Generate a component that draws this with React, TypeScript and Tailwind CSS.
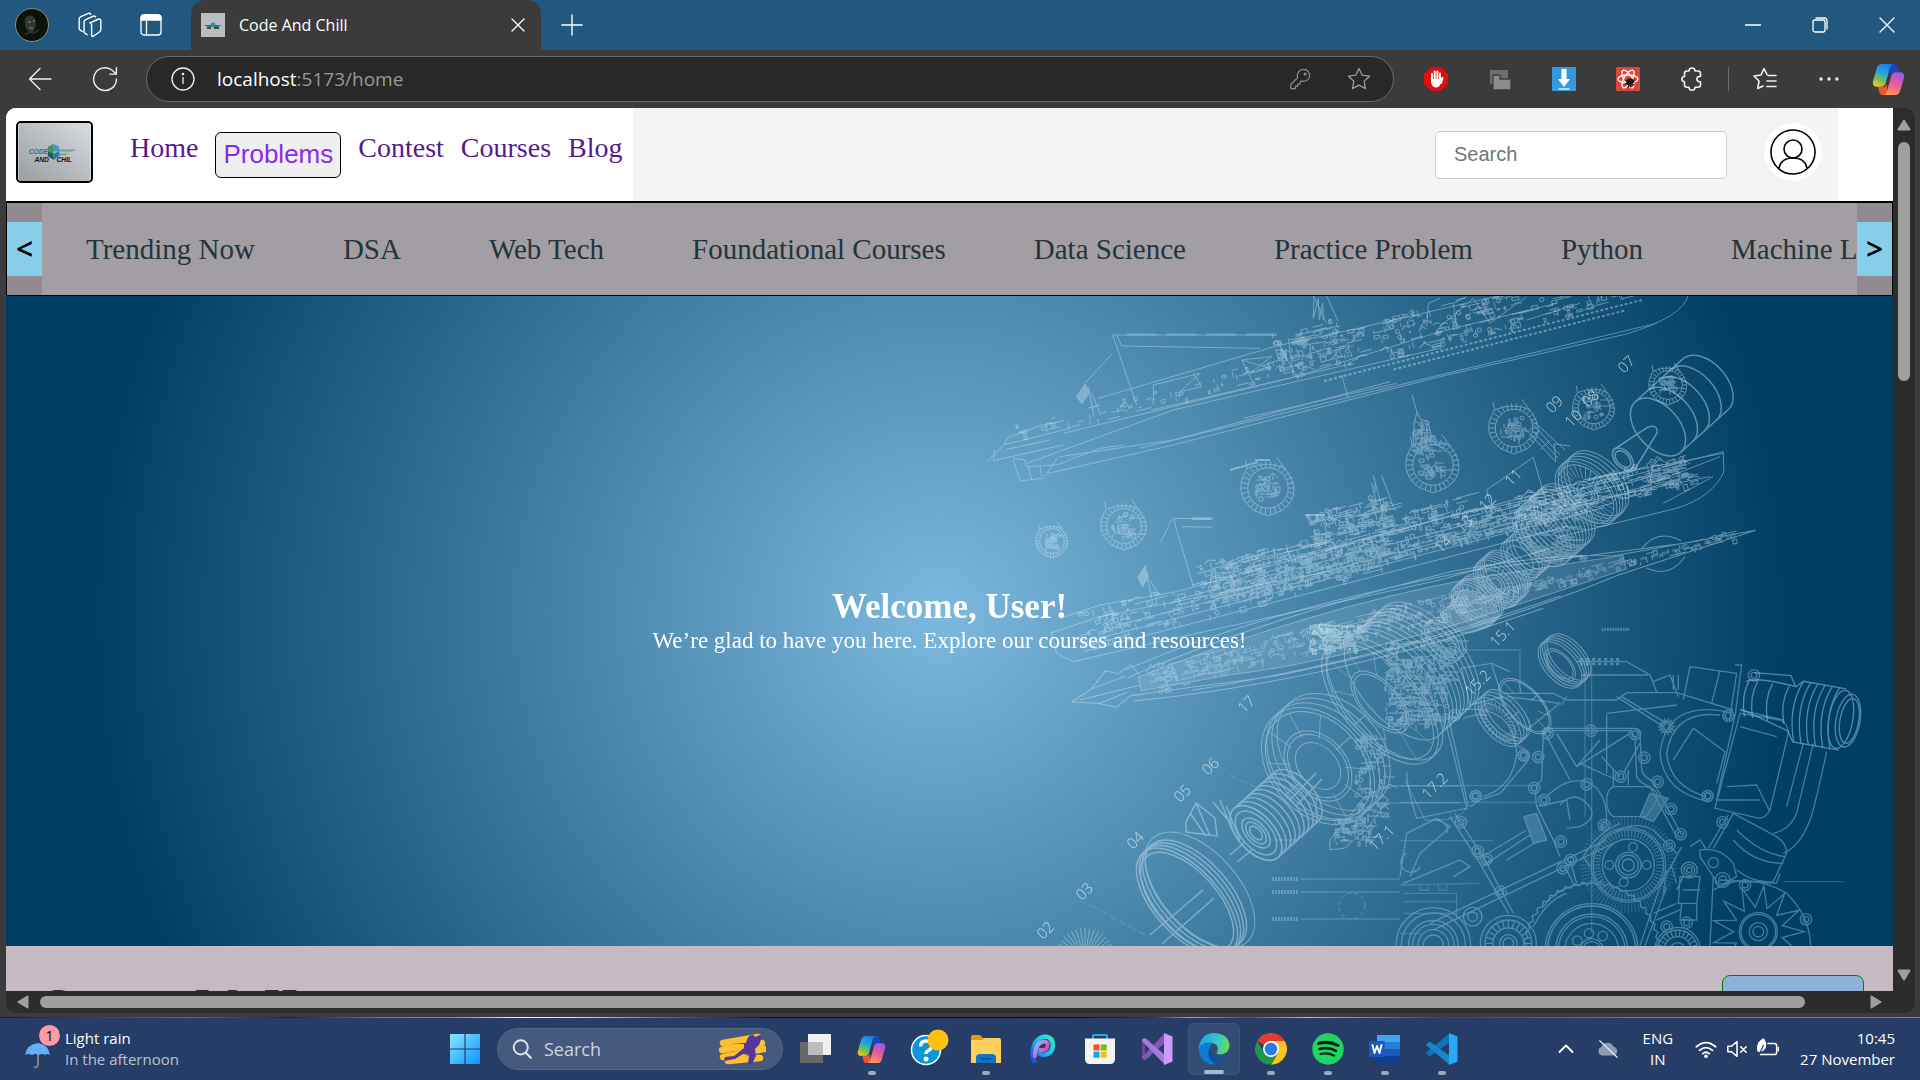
import React from "react";

/* ---------- blueprint artwork helpers ---------- */

function seeded(seed: number) {
  let s = seed;
  return () => {
    s = (s * 16807) % 2147483647;
    return s / 2147483647;
  };
}

/* Small boxes, ticks and struts scattered along a band of a hull. */
function clutter(seed: number, n: number, u0: number, u1: number, v0: number, v1: number, size: number) {
  const r = seeded(seed);
  let d = "";
  for (let i = 0; i < n; i++) {
    const u = Math.round(u0 + r() * (u1 - u0));
    const v = Math.round(v0 + r() * (v1 - v0));
    const w = Math.round(1 + r() * size);
    const h = Math.round(1 + r() * size * 0.7);
    const k = r();
    if (k < 0.3) d += `M${u} ${v}h${w}v${h}h${-w}z`;
    else if (k < 0.55) d += `M${u} ${v}v${h + 2}`;
    else if (k < 0.82) d += `M${u} ${v}h${w * 3}`;
    else if (k < 0.9) d += `M${u} ${v}l${w} ${-h}l${w} ${h}`;
    else d += `M${u} ${v}a2 2 0 1 0 4 0a2 2 0 1 0 -4 0`;
  }
  return d;
}

function teeth(cx: number, cy: number, r0: number, r1: number, n: number) {
  let d = "";
  for (let i = 0; i < n; i++) {
    const a = (i / n) * Math.PI * 2;
    const c = Math.cos(a);
    const s = Math.sin(a);
    d += `M${(cx + c * r0).toFixed(1)} ${(cy + s * r0).toFixed(1)}L${(cx + c * r1).toFixed(1)} ${(cy + s * r1).toFixed(1)}`;
  }
  return d;
}

function star(cx: number, cy: number, r0: number, r1: number, n: number) {
  let d = "";
  for (let i = 0; i < n * 2; i++) {
    const a = (i / (n * 2)) * Math.PI * 2;
    const r = i % 2 ? r0 : r1;
    d += `${i ? "L" : "M"}${(cx + Math.cos(a) * r).toFixed(1)} ${(cy + Math.sin(a) * r).toFixed(1)}`;
  }
  return d + "z";
}

function Rings({ x, y, radii }: { x: number; y: number; radii: number[] }) {
  return (
    <>
      {radii.map((r) => (
        <circle key={r} cx={x} cy={y} r={r} />
      ))}
    </>
  );
}

/* Tilted discs stacked along the drive shaft, which climbs at 42 degrees. */
function Stack({ x, y, r, k = 0.55, n = 1, step = 6, inner = [] as number[], spokes = 0 }) {
  return (
    <g transform={`translate(${x} ${y}) rotate(-42)`}>
      {Array.from({ length: n }, (_, i) => (
        <ellipse key={i} cx={i * step} cy={0} rx={r * k} ry={r} />
      ))}
      {inner.map((q) => (
        <ellipse key={"i" + q} cx={0} cy={0} rx={r * k * q} ry={r * q} />
      ))}
      {n > 1 && <path d={`M0 ${-r}h${(n - 1) * step}M0 ${r}h${(n - 1) * step}`} />}
      {spokes > 0 && (
        <g transform={`scale(${k} 1)`}>
          <path d={teeth(0, 0, r * 0.5, r * 0.92, spokes)} />
        </g>
      )}
    </g>
  );
}

/* A ring whose near faces sweep away along the shaft, showing only the front arcs. */
function Drum({ x, y, r, k, n, step }: { x: number; y: number; r: number; k: number; n: number; step: number }) {
  return (
    <g transform={`translate(${x} ${y}) rotate(-42)`}>
      <ellipse rx={r * k} ry={r} />
      {Array.from({ length: n }, (_, i) => (
        <path key={i} d={`M${(i + 1) * step} ${-r}A${r * k} ${r} 0 0 1 ${(i + 1) * step} ${r}`} />
      ))}
      <path d={`M0 ${-r}h${n * step}M0 ${r}h${n * step}`} />
    </g>
  );
}

function Section({ x, y, r, seed }: { x: number; y: number; r: number; seed: number }) {
  return (
    <g transform={`translate(${x} ${y})`}>
      <path d={`M${-r * 0.8} ${-r}L${-r * 0.75} ${-r * 0.7}Q${-r * 1.3} ${r * 0.2} ${-r * 0.5} ${r * 0.8}L0 ${r}L${r * 0.5} ${r * 0.8}Q${r * 1.3} ${r * 0.2} ${r * 0.6} ${-r * 0.7}L${r * 0.3} ${-r * 1.1}M${-r * 0.75} ${-r * 0.7}Q0 ${-r} ${r * 0.6} ${-r * 0.7}`} />
      <circle r={r * 0.72} />
      <path d={teeth(0, 0, r * 0.72, r * 0.95, 30)} />
      <path d={clutter(seed, 34, -r * 0.5, r * 0.3, -r * 0.5, r * 0.4, r * 0.2)} />
    </g>
  );
}

const partLabels: [string, number, number][] = [
  ["07", 1624, 374], ["09", 1552, 414], ["10", 1571, 428], ["08", 1588, 408], ["11", 1511, 487],
  ["12", 1485, 512], ["13", 1462, 534], ["14", 1441, 554], ["15.1", 1496, 648], ["15.2", 1471, 697],
  ["17.2", 1428, 800], ["17.1", 1375, 852], ["17", 1244, 714], ["06", 1208, 776], ["05", 1180, 803],
  ["04", 1133, 850], ["03", 1082, 901], ["02", 1043, 940], ["16", 1318, 641],
];

const bolts = [
  [443, 400], [573, 392], [705, 402], [733, 473], [773, 545], [813, 627], [842, 703], [808, 737], [923, 588],
  [985, 347], [800, 380], [968, 667], [227, 588], [371, 466], [415, 471], [403, 564], [432, 600], [560, 553],
  [612, 675], [662, 530], [183, 667], [233, 753], [260, 778], [483, 725], [512, 780], [488, 805], [302, 875],
  [1218, 958], [800, 980], [860, 968], [165, 345], [1035, 855], [1062, 226],
];

function Blueprint() {
  return (
    <svg
      viewBox="960 296 933 650"
      className="absolute right-0 top-0 h-full"
      fill="none"
      stroke="#cfe6f3"
      strokeWidth="1"
      aria-hidden="true"
    >
      {/* upper ship */}
      <g opacity="0.42" transform="translate(960 290) scale(.3333)" strokeWidth="3">
        <path d="M80 516L135 462L140 445L245 405L290 398M105 480L100 512L310 465M140 478L270 450M130 465L330 415" />
        <path d="M415 325L950 168L1180 118L1690 0M310 430L1000 262L1440 125L1790 40M200 520L640 360L1440 175" />
        <path d="M265 550L640 465L1440 260L2000 132Q2170 80 2185 15" />
        <path d="M300 500L640 450L1290 275M850 385L1310 280M540 475L1440 255L2090 100" />
        <path d="M160 505L195 510L200 530L290 525L420 475L490 465M160 510L180 573L250 565L295 500M205 530L215 570M240 530L245 560" />
        <path d="M458 135L530 345M458 135L950 135M485 168L900 175M470 135L485 168M458 190L375 280M1060 18L1100 100M1100 18L1135 95M1145 255L1165 325M575 360L1180 220" />
        <path d="M500 134H950" strokeWidth="8" strokeDasharray="90 30" opacity=".6" />
        <path d="M375 282L350 320L366 342L388 308z" fill="#cfe6f3" fillOpacity=".9" />
        <path d="M385 290L402 380M395 310L422 375" />
        <path d="M580 330L580 285L720 250L660 305L725 290L700 250M845 210L930 235L870 250L935 200L845 210L880 280M950 150L1015 270M985 145L1000 260M1400 110L1405 40L1440 25M1520 20L1480 40L1490 115M1440 110L1540 25L1590 100L1700 20M1700 90L1860 40" />
        <path d="M1062 20L1060 85L1075 25L1078 90L1088 40L1090 90" />
      </g>
      <g opacity="0.42" transform="translate(1000 445) rotate(-14.3)">
        <path d={clutter(11, 70, 20, 300, -15, 2, 4)} />
        <path d={clutter(12, 240, 290, 660, -28, 6, 6)} />
        <path d={clutter(14, 80, 290, 360, -40, 0, 6)} />
        <path d={clutter(13, 60, 400, 640, 4, 14, 6)} />
        <path d="M330 18H660M400 24H640" strokeDasharray="3 2" strokeWidth="2" />
      </g>

      {/* cross sections */}
      <g opacity="0.45">
        <Section x={1052} y={541} r={17} seed={3} />
        <Section x={1124} y={526} r={24} seed={4} />
        <Section x={1268} y={488} r={28} seed={5} />
        <Section x={1433} y={465} r={28} seed={6} />
        <Section x={1514} y={428} r={26} seed={7} />
        <Section x={1594} y={408} r={22} seed={8} />
        <Section x={1668} y={385} r={20} seed={9} />
        <path d="M1412 395L1417 412L1414 424L1413 448M1417 412L1421 420L1428 421L1432 440L1446 452M1414 430H1430M1416 438H1432M1422 422V450M1427 424V450" />
        <path d={clutter(10, 40, 1413, 1430, 422, 455, 5)} />
        <path d="M1532 420L1565 450M1526 430L1556 462M1540 430L1530 440M1550 440L1540 450M1556 462L1554 444L1570 446M1534 425L1560 455M1530 428L1558 458" />
        <path d="M1230 470L1258 462M1255 460H1270M1305 515H1325" strokeWidth="2" />
      </g>

      {/* middle ship */}
      <g opacity="0.45" transform="translate(960 290) scale(.3333)" strokeWidth="3">
        <path d="M640 685L700 890M640 685L760 687M665 710L755 712M635 690L600 760" />
        <path d="M695 686H755" strokeWidth="8" />
        <path d="M555 828L533 862L548 890L565 860z" fill="#cfe6f3" fillOpacity=".9" />
        <path d="M560 850L575 925M570 870L600 918" />
        <path d="M1240 555L1270 670M1265 555L1300 650M1235 580L1250 640M1245 580V610" />
        <path d="M300 985L420 945L650 905L1120 775L1460 680L1850 600L2290 485L2292 545Q2260 620 2150 655L1800 740M275 1030L290 1090L340 1115L620 1050L1440 870L1790 770M270 1030L420 980L1100 845" />
        <path d="M760 835L750 890L775 890zM760 835L1120 755M800 830L820 875M870 815L880 860M980 775L1000 830M1120 755L1140 800M1015 770L1110 755" />
        <path d="M1580 600L1720 502L1760 640M1580 600L1590 640M1870 570L2290 490M2060 520L2075 580L2280 500M2110 640L2260 560M1800 650L2250 560" />
      </g>
      <g opacity="0.45" transform="translate(1060 640) rotate(-14.5)">
        <path d={clutter(21, 260, 20, 330, -22, 14, 6)} />
        <path d={clutter(22, 460, 150, 420, -38, 6, 7)} />
        <path d={clutter(23, 130, 270, 350, -60, -34, 6)} />
        <path d={clutter(24, 320, 420, 650, -24, 6, 7)} />
        <path d="M40 8H560M60 0H640M120 -10H650M20 17H520M200 -22H600" />
        <path d="M150 -4H560M180 4H520" strokeDasharray="4 3" strokeWidth="3" opacity=".6" />
      </g>

      {/* plan view hull */}
      <g opacity="0.45" transform="translate(1072 702) rotate(-14.1)">
        <path d="M60 -18Q200 -42 420 -30L640 -4M60 14Q260 44 480 24M60 -10Q200 -34 400 -34Q500 -28 560 -10L705 0L560 10Q400 34 200 24L60 8M120 18Q300 34 500 16" />
        <path d="M70 -8L160 -18Q300 -30 420 -22L570 -8V6L400 18Q250 24 160 12L70 6z" fill="#cfe6f3" fillOpacity=".3" />
        <path d="M0 0L22 -8L40 -22L52 -16L66 -22L72 -10M0 0L26 8L42 16L58 8L72 10M8 0H70M22 -8L58 -12M26 8L56 4" />
        <path d={clutter(31, 300, 80, 400, -15, 10, 6)} />
        <path d={clutter(32, 110, 400, 680, -5, 4, 5)} />
        <path d="M590 -10Q610 -26 630 -8M590 10Q610 26 630 8" />
        <path d="M80 0H680" strokeDasharray="7 4" strokeWidth="3" opacity=".5" />
      </g>

      {/* exploded turbine along the shaft */}
      <g opacity="0.45">
        <g strokeWidth="1.5">
          <Drum x={1658} y={427} r={34} k={0.62} n={4} step={16} />
          <Stack x={1623} y={459} r={13} k={0.62} n={1} inner={[0.75]} />
          <path d="M1613 450L1648 427Q1658 424 1657 433L1635 469" />
        </g>
        <Stack x={1586} y={494} r={38} k={0.62} n={5} step={4} inner={[0.9, 0.4, 0.3, 0.2]} spokes={30} />
        <Stack x={1542} y={536} r={36} k={0.62} n={9} step={4} inner={[0.85, 0.7, 0.55]} spokes={40} />
        <path d={clutter(40, 110, 1525, 1580, 500, 560, 6)} />
        <Stack x={1520} y={560} r={24} k={0.6} n={5} step={4} inner={[0.7]} />
        <Stack x={1496} y={584} r={28} k={0.62} n={6} step={3} inner={[0.8, 0.6, 0.4, 0.25]} spokes={28} />
        <path d="M1450 605Q1470 580 1490 600T1480 630Q1455 640 1440 615z" fill="#cfe6f3" fillOpacity=".45" />
        <Stack x={1472} y={606} r={26} k={0.6} n={6} step={3} inner={[0.7, 0.5]} spokes={22} />
        <Stack x={1441} y={643} r={24} k={0.6} n={3} step={4} inner={[0.75]} spokes={24} />
        <path d={clutter(44, 70, 1310, 1360, 625, 650, 5)} strokeWidth="2" />
        <Drum x={1395} y={686} r={66} k={0.5} n={9} step={5} />
        <path d={clutter(41, 260, 1385, 1445, 640, 725, 8)} />
        <Stack x={1380} y={702} r={76} k={0.5} n={2} step={6} inner={[0.92, 0.5, 0.45]} spokes={10} />
        <Stack x={1318} y={766} r={66} k={0.72} n={4} step={7} inner={[0.93, 0.6, 0.54, 0.4]} spokes={10} />
        <path d={clutter(42, 90, 1355, 1385, 735, 820, 6)} />
        <path d="M1330 840L1345 822L1362 800L1378 790L1388 800L1370 825L1345 848L1330 850z" />
        <path d={clutter(43, 60, 1334, 1370, 818, 843, 5)} />
        <g strokeWidth="1.5">
          <Drum x={1256} y={833} r={33} k={0.55} n={9} step={6} />
          <Stack x={1256} y={833} r={33} k={0.55} inner={[0.8, 0.55, 0.4, 0.25]} />
        </g>
        <path d="M1186 822L1196 803L1215 818L1217 836L1186 832zM1196 803L1210 836M1190 813L1206 836M1213 802L1228 820M1220 800L1232 830M1226 806L1240 840" strokeWidth="1.5" />
        <g strokeWidth="1.5">
          <Stack x={1187} y={902} r={66} k={0.5} n={4} step={4} inner={[0.92]} />
          <ellipse cx="1200" cy="890" rx="38" ry="70" transform="rotate(-42 1200 890)" strokeWidth="1" />
          <path d="M1150 935L1203 890M1162 944L1214 898M1230 855L1245 842M1237 862L1252 850M1290 800L1316 773M1296 806L1322 779" />
        </g>
        <Stack x={1560} y={665} r={28} k={0.55} n={5} step={3} inner={[0.7, 0.6]} />
        <Stack x={1498} y={722} r={30} k={0.5} n={4} step={4} inner={[0.75]} spokes={30} />
        <Stack x={1525} y={706} r={34} k={0.5} n={1} inner={[0.93]} spokes={8} />
        <path d={teeth(1085, 958, 12, 30, 40)} />
        <path d="M1090 905L1145 935M1230 775L1255 787" strokeDasharray="8 3" strokeWidth="1" opacity=".5" />
      </g>

      {/* engine block */}
      <g opacity="0.42" stroke="#9fd0ea" transform="translate(1400 600) scale(.3333)" strokeWidth="4">
        <path d="M140 380L200 625L50 655Q20 560 20 515M145 350L205 620M185 205L210 315L310 290M275 195L300 270M180 205L275 190L330 215M310 280H460L500 300H650L680 278H830L1000 330" />
        <path d="M320 290L480 310L380 390M650 290L790 380M665 290L800 370M500 290L485 315M530 185H680L750 225L770 275M545 225H745M760 245L810 225L835 290M870 200L1010 220L990 350M850 300L870 200M960 210L935 310M1005 195H1025L1005 350M820 225V270M835 225V270" />
        <path d="M1020 340L945 625L1080 655Q1100 650 1110 630L1165 400Q1165 370 1140 360zM1005 345L950 600M1020 330L1150 360M1020 380L1130 410M980 560L1070 555L1110 635M950 600L1080 600" />
        <path d="M430 400Q430 385 445 385H700Q715 385 720 400L725 510Q730 530 760 545L845 705M445 400L460 392H690L705 410L710 530Q720 550 750 560L830 710M430 400L425 540Q400 560 410 620L470 740M440 410L510 540M470 400L530 500L600 420M530 500L690 400M540 490L650 540M605 470L660 530M720 430L670 520M640 510V560M685 510V555M620 340L830 315M620 345V520" />
        <path d="M640 560H740Q780 570 770 600L740 650H640Q620 640 620 600Q620 570 640 560z" />
        <path d="M410 620L500 600L510 660M480 615Q520 570 560 610T540 680L500 685M440 590Q500 530 560 545Q620 570 620 660L600 690" />
        <path d="M372 650L410 640L440 720L400 730zM750 580L805 595L760 665L720 650z" fill="#9fd0ea" fillOpacity=".6" />
        <path d="M180 330Q340 310 350 460Q340 560 250 590M190 355Q230 340 260 345M355 440Q390 450 385 480L300 580L240 600L210 620" />
        <path d="M980 335Q800 300 780 460Q790 580 930 605M960 345Q820 330 800 460Q810 560 920 590M820 480L880 385L975 455L950 550" />
        <path d="M150 650L240 790L325 940M165 640L255 780L340 940M230 780L380 690M245 800L390 705M90 970L620 720M100 990L640 730M420 720L320 780M510 780L530 850M495 800L520 850M460 720L480 770" />
        <path d="M1000 640L1130 710Q1160 730 1160 760L1120 845Q1060 850 1010 810M1000 640L940 745M985 645L925 745M1140 820L1130 850L960 840M1010 690Q1080 760 1155 770M1000 720Q1060 790 1150 790M1280 455Q1240 640 1230 660Q1200 740 1150 760M1240 430L1190 640Q1170 690 1120 700M1210 430L1160 620" />
        <path d="M840 830H900L890 910H835zM845 910L840 960H890V910M850 870H900M830 870L850 830M900 750Q960 740 1000 790L1010 830L960 860L900 770zM815 800L830 850M870 740L900 720L920 750M760 940L830 910M770 960L840 930M720 1037L780 860L845 740M735 1037L800 860M930 1037L940 830" />
        <path d="M0 557H400M0 607H405M0 722H280M1150 845H1330M0 855L240 850M0 150H360V280M555 180V650M575 180V1000M10 880H170M10 905H170M10 940H170M0 1000H60M170 880V960M60 850V870H85V850M115 850V870H140V850" opacity=".6" />
        <path d="M640 700Q700 660 760 690L830 760M570 800L550 770Q590 700 660 670M800 810L790 880M430 920Q480 850 580 850M400 980Q440 900 500 880" />
        <Rings x={685} y={795} radii={[112, 106, 78, 38, 30, 18]} />
        <path d={teeth(685, 795, 84, 104, 60)} opacity=".7" />
        <path d={teeth(685, 795, 116, 145, 80)} opacity=".4" />
        <Rings x={628} y={795} radii={[13]} />
        <Rings x={740} y={795} radii={[13]} />
        <Rings x={699} y={741} radii={[13]} />
        <Rings x={671} y={847} radii={[13]} />
        <Rings x={575} y={1050} radii={[139, 132, 108, 100, 80, 34, 26]} />
        <path d={star(575, 1050, 196, 206, 48)} />
        <Rings x={567} y={1000} radii={[14]} />
        <Rings x={608} y={1008} radii={[14]} />
        <Rings x={532} y={1022} radii={[14]} />
        <Rings x={325} y={1030} radii={[84, 70, 46, 26, 16]} />
        <path d={teeth(325, 1030, 48, 70, 24)} />
        <Rings x={100} y={1035} radii={[112, 96, 74, 62, 46, 30]} />
        <Rings x={218} y={950} radii={[28, 14]} />
        <Rings x={833} y={1050} radii={[68, 60, 40, 22]} />
        <path d={teeth(833, 1050, 42, 60, 26)} />
        <Rings x={868} y={810} radii={[24, 16, 8]} />
        <Rings x={940} y={788} radii={[15]} />
        <Rings x={968} y={840} radii={[22, 12]} />
        <Rings x={1075} y={995} radii={[57, 52, 27, 16]} />
        <path d={star(1075, 995, 74, 138, 13)} />
        <path d="M940 870Q1040 810 1160 880Q1230 950 1232 1037" />
        {bolts.map(([x, y]) => (
          <Rings key={`${x}-${y}`} x={x} y={y} radii={[17, 9]} />
        ))}
        <path d={teeth(985, 347, 9, 17, 10) + teeth(800, 380, 12, 26, 14) + teeth(923, 588, 9, 17, 10) + teeth(371, 466, 9, 17, 10) + teeth(227, 588, 9, 17, 10)} />
        <path d="M0 830L20 700L110 655L150 680L130 700L60 760L30 830M10 850L60 830L180 780L210 800L160 830M20 760A30 30 0 1 0 60 800M110 660Q150 670 140 700" />
        <path d="M540 178H665M540 192H665" strokeDasharray="10 8" strokeWidth="8" />
        <path d="M605 88H688" strokeDasharray="5 3" strokeWidth="10" />
      </g>

      {/* intake hose */}
      <g opacity="0.5" stroke="#9fd0ea" transform="translate(1400 600) scale(.3333) rotate(10 1040 290)" strokeWidth="4">
        <path d="M1030 245Q1060 225 1180 235L1200 215H1330M1030 330L1180 370L1200 400H1340M1050 215L1160 205L1180 235" />
        {[1040, 1065, 1110, 1160].map((x) => (
          <path key={x} d={`M${x} 238Q${x - 18} 290 ${x + 4} 350`} />
        ))}
        {[1200, 1222, 1244, 1266, 1288, 1310].map((x) => (
          <path key={x} d={`M${x} 215Q${x - 34} 300 ${x + 4} 402`} />
        ))}
        <ellipse cx="1352" cy="308" rx="36" ry="80" />
        <ellipse cx="1356" cy="308" rx="28" ry="68" />
        <ellipse cx="1330" cy="308" rx="36" ry="88" />
      </g>

      {/* notes and measures */}
      <g opacity="0.3">
        <path d="M1300 879H1400M1300 892H1400M1300 919H1400M1275 840H1295M1388 786H1460M1388 803H1460" />
        <path d="M1272 879H1298M1272 892H1298M1272 919H1298" strokeWidth="4" strokeDasharray="2 1" />
        <circle cx="1352" cy="906" r="13" strokeDasharray="4 3" />
        <path d="M1405 780L1425 820Q1460 822 1466 808" />
      </g>

      <g fill="#e4f2fa" stroke="none" opacity="0.75" className="font-['Open_Sans',sans-serif] text-[15px] font-light">
        {partLabels.map(([t, x, y]) => (
          <text key={t} transform={`translate(${x} ${y}) rotate(-45)`}>
            {t}
          </text>
        ))}
      </g>
    </svg>
  );
}

/* ---------- icons ---------- */

function Icon({ size, children, box = 24, className = "" }: { size: number; box?: number; className?: string; children: React.ReactNode }) {
  return (
    <svg
      width={size}
      height={size}
      viewBox={`0 0 ${box} ${box}`}
      fill="none"
      stroke="currentColor"
      strokeWidth="1.3"
      strokeLinecap="round"
      strokeLinejoin="round"
      className={`shrink-0 ${className}`}
      aria-hidden="true"
    >
      {children}
    </svg>
  );
}

function CopilotLogo({ size, id }: { size: number; id: string }) {
  return (
    <Icon size={size} box={32}>
      <defs>
        <linearGradient id={id + "a"} x1="0.6" y1="0" x2="0.2" y2="1">
          <stop offset="0" stopColor="#1b7fe6" />
          <stop offset="0.4" stopColor="#23a8d8" />
          <stop offset="0.7" stopColor="#7cbc50" />
          <stop offset="1" stopColor="#f3cc20" />
        </linearGradient>
        <linearGradient id={id + "b"} x1="0.7" y1="0" x2="0.3" y2="1">
          <stop offset="0" stopColor="#9a5be8" />
          <stop offset="0.5" stopColor="#ec5a98" />
          <stop offset="1" stopColor="#ff9a58" />
        </linearGradient>
      </defs>
      <g stroke="none">
        <path d="M17 1h5c2 0 2.600 1.500 3.200 4l1 4h-5c-2 0-3 1-3.600 3z" fill="#1747c4" />
        <path d="M15 31h-5c-2 0-2.600-1.500-3.200-4l-1-4h5c2 0 3-1 3.600-3z" fill="#f0532d" />
        <path d="M9.500 1H21c-2 0-3 1.500-3.600 3.500L13.500 19c-.7 2.500-2 4-4.500 4H4.500C1 23 .3 20 1.200 17L4.800 4.500C5.500 2.200 7 1 9.500 1z" fill={`url(#${id}a)`} />
        <path d="M22.500 31H11c2 0 3-1.500 3.600-3.500L18.500 13c.7-2.500 2-4 4.500-4h4.500c3.500 0 4.200 3 3.300 6l-3.600 12.500c-.7 2.300-2.200 3.500-4.700 3.500z" fill={`url(#${id}b)`} />
      </g>
    </Icon>
  );
}

function HandStop() {
  return (
    <Icon size={24}>
      <path d="M7 0h10l7 7v10l-7 7H7l-7-7V7z" fill="#e40d0d" stroke="none" />
      <path d="M8 13V7M10.700 12V4.500M13.400 12V4.500M16 13V6.500M8 12v3M18.500 11l-1.500 5" stroke="#fff" strokeWidth="2" />
      <path d="M7 12h10l-.5 5q-1.500 3.500-4.500 3.500T7.500 17z" fill="#fff" stroke="none" />
    </Icon>
  );
}

function LogoMark() {
  return (
    <svg viewBox="0 0 76 61" className="block h-full w-full" aria-hidden="true">
      <defs>
        <linearGradient id="plate" x1="0" y1="1" x2="1" y2="0">
          <stop offset="0" stopColor="#989d9f" />
          <stop offset="1" stopColor="#d9dce2" />
        </linearGradient>
      </defs>
      <rect width="76" height="61" fill="url(#plate)" />
      <path d="M40 28h22l-6 2h-16zM42 32h12l-5 2h-7z" fill="#6fa08e" />
      <path d="M37 22l6 3v5h-6z" fill="#3a9ac9" />
      <path d="M37 22l-6 3v5l6 2z" fill="#4a8f52" />
      <path d="M31 30l6 2v7l-6-4z" fill="#1d5b63" />
      <path d="M43 30v5l-6 4v-7z" fill="#2c7c96" />
      <text x="11" y="33" fontSize="7" fontStyle="italic" fontWeight="700" fill="#2f6d86" fontFamily="Liberation Sans, sans-serif">CODE</text>
      <text x="17" y="41" fontSize="7" fontStyle="italic" fontWeight="700" fill="#111" fontFamily="Liberation Sans, sans-serif">AND</text>
      <text x="40" y="41" fontSize="7" fontStyle="italic" fontWeight="700" fill="#111" fontFamily="Liberation Sans, sans-serif">CHIL</text>
    </svg>
  );
}

/* ---------- browser chrome ---------- */

function TitleBar() {
  return (
    <div className="flex h-[50px] shrink-0 items-center bg-[#22577f] text-white">
      <button aria-label="Profile" className="ml-[15px] h-[34px] w-[34px] overflow-hidden rounded-full border border-[#8d8f7c] bg-[#0b120c]">
        <svg viewBox="0 0 32 32" aria-hidden="true">
          <path d="M9 9q5-5 10 0l1 8-3 7h-4l-4-6z" fill="#2f382f" />
          <path d="M12 13h3M17 12h2M13 19h4" stroke="#6c7367" strokeWidth="1.300" />
          <path d="M9 26q4-4 9-2l5-3" stroke="#273027" strokeWidth="2" fill="none" />
        </svg>
      </button>
      <button aria-label="Workspaces" className="ml-7">
        <Icon size={26}>
          <path d="M12 10l7.500-3.300q2.500-.8 2.500 1.500v8q0 1.200-1 2l-5.600 4q-1.900 1-1.900-1V12q0-1.200-1.500-2z" />
          <path d="M9.500 21l-2-1.200q-1-.6-1-1.800V9.300q0-1.500 1.500-2.200l7-3.300q1.500-.5 2.200.8" />
          <path d="M5 18l-2-1.200q-1-.6-1-1.800V6.500q0-1.500 1.500-2.200l7-3q1.500-.5 2.200.8" />
        </Icon>
      </button>
      <button aria-label="Tab actions menu" className="ml-9">
        <Icon size={24}>
          <rect x="2" y="2" width="20" height="20" rx="3" />
          <path d="M2 7V5q0-3 3-3h14q3 0 3 3v2z" fill="#fff" />
          <path d="M7.500 8v14" />
        </Icon>
      </button>
      <div className="ml-7 flex h-[50px] w-[350px] items-center rounded-t-[14px] bg-[#3b3b3b] pl-[10px] pr-3">
        <div className="h-6 w-6 shrink-0">
          <svg viewBox="0 0 24 24" aria-hidden="true">
            <rect width="24" height="24" fill="#b9bdc2" />
            <path d="M3 12h18l-4 2H7z" fill="#3d6b75" />
            <circle cx="12" cy="12" r="2.500" fill="#2a8a9c" />
            <path d="M6 15h4M13 15h5" stroke="#222" strokeWidth="1.300" />
          </svg>
        </div>
        <span className="ml-[14px] flex-1 text-base">Code And Chill</span>
        <button aria-label="Close tab" className="p-1">
          <Icon size={14} box={14}>
            <path d="M1 1l12 12M13 1L1 13" />
          </Icon>
        </button>
      </div>
      <button aria-label="New tab" className="ml-5">
        <Icon size={22}>
          <path d="M12 1v22M1 12h22" strokeWidth="1.500" />
        </Icon>
      </button>
      <div className="ml-auto flex">
        <button aria-label="Minimize" className="flex h-[50px] w-[67px] items-center justify-center">
          <Icon size={16} box={16}><path d="M0 8h16" /></Icon>
        </button>
        <button aria-label="Restore" className="flex h-[50px] w-[67px] items-center justify-center">
          <Icon size={16} box={16}>
            <rect x="1" y="3" width="12" height="12" rx="2" />
            <path d="M4 1h8q3 0 3 3v8" />
          </Icon>
        </button>
        <button aria-label="Close" className="flex h-[50px] w-[67px] items-center justify-center">
          <Icon size={16} box={16}><path d="M1 1l14 14M15 1L1 15" /></Icon>
        </button>
      </div>
    </div>
  );
}

function ToolButton({ label, children }: { label: string; children: React.ReactNode }) {
  return (
    <button aria-label={label} className="flex h-11 w-16 shrink-0 items-center justify-center">
      {children}
    </button>
  );
}

function Toolbar() {
  return (
    <div className="flex h-[58px] shrink-0 items-center text-[#f0f0f0]">
      <button aria-label="Back" className="ml-7">
        <Icon size={24}><path d="M23 12H1.500M12 1.500L1.500 12 12 22.500" /></Icon>
      </button>
      <button aria-label="Refresh" className="ml-10">
        <Icon size={26}>
          <path d="M22.500 12A10.500 10.500 0 1 1 18 3.500L22 7M22.500 1.500V7.500H16.500" />
        </Icon>
      </button>
      <div className="ml-7 flex h-[46px] min-w-0 flex-1 items-center rounded-full border border-[#6a6a6a] bg-[#282828] pl-6 pr-[22px]">
        <Icon size={24}>
          <circle cx="12" cy="12" r="11" />
          <path d="M12 10.500v6" />
          <circle cx="12" cy="7" r=".7" fill="currentColor" />
        </Icon>
        <span className="ml-[22px] flex-1 text-[19px] leading-6 text-[#999]">
          <span className="text-white">localhost</span>:5173/home
        </span>
        <button aria-label="Saved passwords" className="text-[#8c8c8c]">
          <Icon size={22}>
            <path d="M16 1.500a6.500 6.500 0 1 1-2.500 12.500L12 15.500v2h-2.500V20H7v2.500H2V18l7.600-7.600A6.500 6.500 0 0 1 16 1.500z" />
            <circle cx="17.500" cy="6.500" r="1" />
          </Icon>
        </button>
        <button aria-label="Add to favorites" className="ml-9 text-[#9a9a9a]">
          <Icon size={24}>
            <path d="M12 1.500l3.200 6.700 7.300 1-5.300 5.100 1.300 7.300L12 18.100l-6.500 3.500 1.300-7.300L1.500 9.200l7.300-1z" />
          </Icon>
        </button>
      </div>
      <div className="ml-[10px] flex items-center">
        <ToolButton label="Ad blocker"><HandStop /></ToolButton>
        <ToolButton label="Window extension">
          <Icon size={24}>
            <path d="M2 3h18v14H2z" fill="#6e6e6e" stroke="none" />
            <path d="M5 8h7v4h11v11H5z" fill="#8c8c8c" stroke="#3b3b3b" />
          </Icon>
        </ToolButton>
        <ToolButton label="Downloader">
          <Icon size={24}>
            <path d="M0 0h24v24H0z" fill="#3698dd" stroke="none" />
            <path d="M9.500 2h5v10h3.500l-6 8-6-8h3.500z" fill="#fff" stroke="none" />
            <path d="M6.500 22h11" stroke="#fff" strokeLinecap="butt" />
          </Icon>
        </ToolButton>
        <ToolButton label="React developer tools">
          <Icon size={24}>
            <rect width="24" height="24" rx="1" fill="#d8473a" stroke="none" />
            <g stroke="#fff">
              <ellipse cx="12" cy="12" rx="10" ry="4" />
              <ellipse cx="12" cy="12" rx="10" ry="4" transform="rotate(60 12 12)" />
              <ellipse cx="12" cy="12" rx="10" ry="4" transform="rotate(120 12 12)" />
            </g>
            <ellipse cx="14" cy="15" rx="3" ry="4" fill="#241412" stroke="none" transform="rotate(40 14 15)" />
            <path d="M9 13l9 5M12 20l6-7M15 20l-3-8M9 17l9-2" stroke="#241412" />
          </Icon>
        </ToolButton>
        <ToolButton label="Extensions">
          <Icon size={24}>
            <path d="M9 4a3 3 0 0 1 6 0h3q2.500 0 2.500 2.500v3h-1a2.600 2.600 0 0 0 0 5.200h1v3q0 2.500-2.500 2.500h-3a3 3 0 0 1-6 0H7q-2.500 0-2.500-2.500v-3a2.600 2.600 0 0 1 0-5.200v-3Q4.500 4 7 4z" strokeWidth="1.600" />
          </Icon>
        </ToolButton>
        <div className="mx-1 h-6 w-px bg-[#696969]" />
        <ToolButton label="Favorites">
          <Icon size={24}>
            <path d="M14 7.500L11 1.500 8 8l-7 1 5 5-1.200 7.500L10 19M15 8.500h8M14 14h9M14 19.500h9" strokeWidth="1.600" />
          </Icon>
        </ToolButton>
        <ToolButton label="Settings and more">
          <Icon size={20}>
            <g fill="currentColor" stroke="none">
              <circle cx="2.500" cy="12" r="2" />
              <circle cx="12" cy="12" r="2" />
              <circle cx="21.500" cy="12" r="2" />
            </g>
          </Icon>
        </ToolButton>
        <button aria-label="Copilot" className="flex w-[59px] items-center justify-center pr-[5px]">
          <CopilotLogo size={33} id="tc" />
        </button>
      </div>
    </div>
  );
}

/* ---------- web page ---------- */

function SiteHeader() {
  return (
    <header className="flex h-[93px] shrink-0 bg-white">
      <div className="flex items-start bg-white pl-[10px] pr-[10px] shadow-[0_0_6px_rgba(0,0,0,0.12)]">
        <a href="#home" aria-label="Code And Chill" className="mt-[13px] block h-[62px] w-[77px] overflow-hidden rounded-[5px] border-2 border-black">
          <LogoMark />
        </a>
        <nav className="ml-[37px] flex items-start gap-[17px] text-[28px] leading-8 text-[#551a8b]">
          <a href="#home" className="mt-6">Home</a>
          <button className="mt-6 h-[46px] rounded-[6px] border border-black bg-[#efefef] px-[7px] pb-[2px] font-['Liberation_Sans',Arial,sans-serif] text-[26px] leading-8 text-[#8a2be2]">
            Problems
          </button>
          <a href="#contest" className="mt-6">Contest</a>
          <a href="#courses" className="mt-6">Courses</a>
          <a href="#blog" className="mt-6">Blog</a>
        </nav>
      </div>
      <div className="mr-[55px] flex flex-1 items-start justify-end bg-[#f4f4f4] pr-4">
        <input
          type="text"
          aria-label="Search"
          placeholder="Search"
          className="mt-[23px] h-12 w-[292px] rounded-[5px] border border-[#ccc] bg-white px-[18px] pb-[2px] font-['Liberation_Sans',Arial,sans-serif] text-[20px] text-black placeholder:text-[#757575]"
        />
        <button aria-label="Account" className="ml-[37px] mt-[15px] flex h-[58px] w-[58px] items-center justify-center rounded-full bg-white text-black">
          <Icon size={46} box={46}>
            <circle cx="23" cy="23" r="22" strokeWidth="1.600" />
            <circle cx="23" cy="20" r="9" strokeWidth="1.600" />
            <path d="M9 39Q11 29 23 29T37 39" strokeWidth="1.600" />
          </Icon>
        </button>
      </div>
    </header>
  );
}

const topics = ["Trending Now", "DSA", "Web Tech", "Foundational Courses", "Data Science", "Practice Problem", "Python", "Machine Learning"];

function TopicStrip() {
  return (
    <div className="flex h-[95px] shrink-0 items-stretch border border-t-2 border-black bg-[#a39ea3]">
      <div className="flex w-[35px] shrink-0 items-center bg-[#928a91]">
        <button className="h-[54px] w-full bg-[#87ceeb] font-['Open_Sans',sans-serif] text-[30px] font-semibold leading-none text-black">&lt;</button>
      </div>
      <nav className="flex min-w-0 flex-1 items-center overflow-hidden pt-[2px] text-[29px] text-[#24343b]">
        {topics.map((t) => (
          <a key={t} href="#topic" className="mx-11 shrink-0 whitespace-nowrap">
            {t}
          </a>
        ))}
      </nav>
      <div className="flex w-[35px] shrink-0 items-center bg-[#928a91]">
        <button className="h-[54px] w-full bg-[#87ceeb] font-['Open_Sans',sans-serif] text-[30px] font-semibold leading-none text-black">&gt;</button>
      </div>
    </div>
  );
}

function Hero() {
  return (
    <section className="relative flex h-[650px] shrink-0 flex-col items-center justify-center overflow-hidden bg-[radial-gradient(circle_at_49.5%_49%,#7db9df_0px,#003e63_850px)] text-white">
      <Blueprint />
      <h1 className="relative text-[35px] font-bold leading-10">Welcome, User!</h1>
      <p className="relative text-[23px] leading-7">We’re glad to have you here. Explore our courses and resources!</p>
    </section>
  );
}

function Page() {
  return (
    <main className="flex min-h-0 min-w-0 flex-1 flex-col overflow-hidden rounded-tl-[10px] bg-[#c5bac3] font-['Liberation_Serif','Times_New_Roman',serif]">
      <SiteHeader />
      <TopicStrip />
      <Hero />
      <section className="flex items-start justify-between px-[29px] pt-[29px]">
        <h2 className="ml-[6px] mt-[5px] whitespace-nowrap text-[42px] font-bold leading-[48px] text-[#2f2f2f]">Courses We Have</h2>
        <button aria-label="View all courses" className="h-[52px] w-[142px] rounded-[8px] border border-[#008000] bg-[#8fb0d8]" />
      </section>
    </main>
  );
}

function Triangle({ className }: { className: string }) {
  return (
    <svg viewBox="0 0 14 12" width="14" height="12" className={className} aria-hidden="true">
      <path d="M7 1.500L12.500 10.500H1.500z" fill="#9f9f9f" stroke="#9f9f9f" strokeWidth="2" strokeLinejoin="round" />
    </svg>
  );
}

/* ---------- taskbar ---------- */

function TaskButton({ label, state = "none", children }: { label: string; state?: "none" | "open" | "active"; children: React.ReactNode }) {
  return (
    <button aria-label={label} className="flex h-[62px] w-[57px] items-center justify-center">
      <span className={state === "active" ? "relative flex h-[52px] w-[52px] items-center justify-center rounded-[6px] border border-[#3f557c] bg-[#344b73]" : "relative flex h-[52px] w-[52px] items-center justify-center"}>
        {children}
        {state === "open" && <span className="absolute bottom-0 h-1 w-2 rounded-full bg-[#9ea9bd]" />}
        {state === "active" && <span className="absolute bottom-0 h-1 w-5 rounded-full bg-[#97c1d6]" />}
      </span>
    </button>
  );
}

function TaskIcons() {
  return (
    <>
      <TaskButton label="Task view">
        <Icon size={32} box={32}>
          <g stroke="none">
            <path d="M1 9h23v21H1z" fill="#676767" />
            <path d="M9 1h23v21H9z" fill="#f1f1f1" />
            <path d="M9 9h15v13H9z" fill="#bdbdbd" />
          </g>
        </Icon>
      </TaskButton>
      <TaskButton label="Copilot" state="open"><CopilotLogo size={29} id="tb" /></TaskButton>
      <TaskButton label="Get help">
        <svg width="40" height="40" viewBox="0 0 40 40" className="shrink-0" aria-hidden="true">
          <circle cx="17" cy="21" r="14.500" fill="#0a97d9" stroke="#fff" strokeWidth="1.500" />
          <path d="M11.500 17.500q0-5.500 5.500-5.500t5.500 5q0 3-3 4.500-2.500 1-2.500 3.500" fill="none" stroke="#fff" strokeWidth="3.400" />
          <circle cx="17" cy="30" r="2.500" fill="#fff" />
          <circle cx="29" cy="11" r="10.500" fill="#fdc00f" />
        </svg>
      </TaskButton>
      <TaskButton label="File Explorer" state="open">
        <Icon size={32} box={32}>
          <g stroke="none">
            <path d="M1 4q0-2 2-2h7l4 4v8H1z" fill="#e09d05" />
            <path d="M1 7h11l2-2h15q2 0 2 2v23H1z" fill="#fdd05a" />
            <path d="M6 30v-5q0-4 4-4h12q4 0 4 4v5z" fill="#0f74c6" />
            <path d="M11 25h10v1.500H11z" fill="#08508f" />
          </g>
        </Icon>
      </TaskButton>
      <TaskButton label="PC app">
        <Icon size={32} box={32}>
          <defs>
            <linearGradient id="pc" x1="0" y1="1" x2="1" y2="0">
              <stop offset="0" stopColor="#2448e8" />
              <stop offset="0.5" stopColor="#20b4f4" />
              <stop offset="1" stopColor="#30f0c4" />
            </linearGradient>
            <linearGradient id="pc2" x1="0" y1="0" x2="1" y2="1">
              <stop offset="0" stopColor="#6fd0ff" />
              <stop offset="0.6" stopColor="#e05bc4" />
              <stop offset="1" stopColor="#6a3bd8" />
            </linearGradient>
          </defs>
          <path d="M7 28Q4 20 7 13Q10 4 18 3.500Q26 4 26 13Q25 21 17 22Q11 22 12 17" stroke="url(#pc)" strokeWidth="4.500" />
          <path d="M8 23Q8 10 17 8.500Q22 9 20.500 14Q19 18 14 17" stroke="url(#pc2)" strokeWidth="4" />
        </Icon>
      </TaskButton>
      <TaskButton label="Microsoft Store">
        <Icon size={32} box={32}>
          <path d="M9 8V2.500Q9 2 9.500 2h13q.5 0 .5.500V8" stroke="#22a7f0" strokeWidth="2" />
          <path d="M1 5.500h30V26q0 5-5 5H6q-5 0-5-5z" fill="#f3f3f3" stroke="none" />
          <g stroke="none">
            <path d="M9.500 11.500h6v6h-6z" fill="#f1511b" />
            <path d="M16.700 11.500h6v6h-6z" fill="#80b900" />
            <path d="M9.500 18.700h6v6h-6z" fill="#00adef" />
            <path d="M16.700 18.700h6v6h-6z" fill="#fbbc09" />
          </g>
        </Icon>
      </TaskButton>
      <TaskButton label="Visual Studio">
        <Icon size={32} box={32}>
          <g stroke="none">
            <path d="M1 6.500l3-1.500 5 3v16l-5 3-3-1.500z" fill="#6b479c" />
            <path d="M4 11v10l5.500-5z" fill="#263f68" />
            <path d="M1 25.500l3 1.500L24 10V0L1 24z" fill="#7f58b4" />
            <path d="M1 6.500L4 5l20 17v10L1 8z" fill="#a779dd" />
            <path d="M23 0l8.500 3.500v25L23 32z" fill="#cf9bfb" />
          </g>
        </Icon>
      </TaskButton>
      <TaskButton label="Microsoft Edge" state="active">
        <Icon size={32} box={32}>
          <defs>
            <linearGradient id="eg" x1="0" y1="0.300" x2="1" y2="0.500">
              <stop offset="0" stopColor="#1fa2e0" />
              <stop offset="0.6" stopColor="#36c6c9" />
              <stop offset="1" stopColor="#63e04f" />
            </linearGradient>
          </defs>
          <g stroke="none">
            <path d="M.5 15Q1 23 6 28q5 4 12 3.500Q8 26 11 16l3-6Q4 6 .5 15z" fill="#0d7cd6" />
            <path d="M11 16Q9 26 17 31q8 0 12-7.500.5-1.500-1-1-9 4-14-2z" fill="#114f9e" />
            <path d="M.5 15Q3 0 16.500 0 31 1 31.500 13q-1 9-11 8.500-3-1-1-3.500 2-6-5-8Q6 8 .5 15z" fill="url(#eg)" />
          </g>
        </Icon>
      </TaskButton>
      <TaskButton label="Google Chrome" state="open">
        <Icon size={32} box={32}>
          <g stroke="none">
            <path d="M16 16L2.300 8A15.700 15.700 0 0 1 29.700 8z" fill="#e63b2e" />
            <path d="M29.700 8H16l7 12-7 11.700A15.700 15.700 0 0 0 29.700 8z" fill="#fcc31e" />
            <path d="M2.300 8L9.200 20 16 23.500h5L16 31.700A15.700 15.700 0 0 1 2.300 8z" fill="#24954a" />
            <circle cx="16" cy="16" r="8" fill="#fff" />
            <circle cx="16" cy="16" r="6.300" fill="#2c7bea" />
          </g>
        </Icon>
      </TaskButton>
      <TaskButton label="Spotify" state="open">
        <Icon size={32} box={32}>
          <circle cx="16" cy="16" r="15.700" fill="#1fd662" stroke="none" />
          <path d="M6.500 10.500q10-3 19.500 2" stroke="#10241a" strokeWidth="3" />
          <path d="M7.500 16q9-2.300 16.500 1.800" stroke="#10241a" strokeWidth="2.600" />
          <path d="M8.500 21q7.500-1.800 13.500 1.600" stroke="#10241a" strokeWidth="2.200" />
        </Icon>
      </TaskButton>
      <TaskButton label="Word" state="open">
        <Icon size={32} box={32}>
          <g stroke="none">
            <path d="M8 2h23v7H8z" fill="#41a5ee" />
            <path d="M8 9h23v7H8z" fill="#2b7cd3" />
            <path d="M8 16h23v7H8z" fill="#185abd" />
            <path d="M8 23h23v7H8z" fill="#103f91" />
            <rect x="0" y="8" width="16" height="16" rx="1.500" fill="#185abd" />
          </g>
          <path d="M3.500 12l2 8L8 13l2.500 7 2-8" stroke="#fff" strokeWidth="1.900" />
        </Icon>
      </TaskButton>
      <TaskButton label="Visual Studio Code" state="open">
        <Icon size={32} box={32}>
          <g stroke="none">
            <path d="M.5 20.500l3 3L24 9V0L.5 19.500z" fill="#0f74bd" />
            <path d="M.5 11.500l3-3L24 23v9L.5 12.500z" fill="#1488d0" />
            <path d="M23 0l8.500 3.500v25L23 32z" fill="#29a9f3" />
          </g>
        </Icon>
      </TaskButton>
    </>
  );
}

function Taskbar() {
  return (
    <footer className="flex h-[62px] shrink-0 items-center bg-[#263e67] text-white">
      <button className="flex w-[450px] items-center pl-6 text-left">
        <span className="relative block h-10 w-[41px]">
          <svg viewBox="0 0 28 30" width="28" height="30" className="absolute bottom-0 left-0" aria-hidden="true">
            <path d="M14 14v12q-1 3-4 2" stroke="#85807f" strokeWidth="2" fill="none" />
            <path d="M1 16Q3 5 14 4q10 1 12 12-3-2-5 0-3-2-6 0-4-2-7 0-4-2-7 0z" fill="#63b1f2" />
          </svg>
          <span className="absolute -top-1 left-[15px] flex h-[21px] w-[21px] items-center justify-center rounded-full bg-[#ff99a4] text-sm leading-none text-black">1</span>
        </span>
        <span className="flex flex-col text-[15px] leading-[21px]">
          <span>Light rain</span>
          <span className="text-[#b9c2d2]">In the afternoon</span>
        </span>
      </button>
      <button aria-label="Start" className="flex w-[30px] justify-center">
        <Icon size={30} box={30}>
          <defs>
            <linearGradient id="win" x1="0" y1="0" x2="1" y2="1">
              <stop offset="0" stopColor="#8be4ff" />
              <stop offset="1" stopColor="#0a95fb" />
            </linearGradient>
          </defs>
          <path d="M0 0h14.400v14.400H0zM15.600 0H30v14.400H15.600zM0 15.600h14.400V30H0zM15.600 15.600H30V30H15.600z" fill="url(#win)" stroke="none" />
        </Icon>
      </button>
      <label className="ml-[17px] flex h-[42px] w-[286px] items-center rounded-full border border-[#52658a] bg-[#455a7d] pl-[14px] pr-4">
        <Icon size={20}>
          <circle cx="10.500" cy="10" r="8.500" strokeWidth="2.300" stroke="#e3e5e9" />
          <path d="M16.500 16.500l6 6" strokeWidth="2.600" stroke="#e3e5e9" />
        </Icon>
        <input aria-label="Search" placeholder="Search" className="ml-[12px] w-0 flex-1 bg-transparent text-[18px] placeholder:text-[#ccd3de]" />
        <svg width="48" height="32" viewBox="0 0 48 32" aria-hidden="true">
          <path d="M5 10L40 4M4 17L44 10M5 24L46 16M10 28L42 25" stroke="#fdc12f" strokeWidth="6.500" strokeLinecap="round" />
          <path d="M14 10h14q1-6 5-8 3-1 4 2l5-2 2 2-3 8-4 4 1 7-4 8h-4l1-9-6-1-8 5-11 2 1-4 9-1 10-8v-4l-12-1z" fill="#55379b" />
        </svg>
      </label>
      <div className="ml-[3px] flex">
        <TaskIcons />
      </div>
      <div className="ml-auto flex items-center pr-[25px] text-[15px] leading-[21px]">
        <button aria-label="Show hidden icons" className="mr-[23px]">
          <Icon size={16} box={16}><path d="M1.500 11L8 4.500l6.500 6.500" strokeWidth="1.800" /></Icon>
        </button>
        <Icon size={22} className="mr-6">
          <path d="M5 19a5 5 0 0 1 0-9.500 7 7 0 0 1 13 0 5 5 0 0 1 1 9.500z" fill="#8d9ab2" stroke="none" />
          <path d="M3 3l19 18" stroke="#e8ebf0" />
        </Icon>
        <button className="mr-[22px] text-center">ENG<br />IN</button>
        <button aria-label="Network, volume and battery" className="mr-[21px] flex items-center gap-[9px]">
          <Icon size={22}>
            <g strokeWidth="2">
              <path d="M1.500 9.500q10.500-9 21 0M5 13.500q7-6 14 0M8.500 17q3.500-3 7 0" />
            </g>
            <circle cx="12" cy="20" r="2" fill="currentColor" stroke="none" />
          </Icon>
          <Icon size={22}>
            <path d="M2 9h4l6-5v16l-6-5H2zM16 9.500l6 6M22 9.500l-6 6" strokeWidth="1.700" />
          </Icon>
          <Icon size={22}>
            <path d="M12 6h7q2.500 0 2.500 2.500v7q0 2.500-2.500 2.500H3" strokeWidth="1.700" />
            <path d="M1 14Q-1 5 7 1q5 7 0 12l-4 2z" fill="#fff" />
            <path d="M2 19l5-11" stroke="#263e67" />
            <path d="M23.500 10.500v3" strokeWidth="2" />
          </Icon>
        </button>
        <button className="text-right">10:45<br />27 November</button>
      </div>
    </footer>
  );
}

export default function App() {
  return (
    <div className="flex h-screen flex-col overflow-hidden bg-[#3b3b3b] font-['Open_Sans','Noto_Sans',sans-serif]">
      <TitleBar />
      <Toolbar />
      <div className="flex min-h-0 flex-1 flex-col pl-[6px] pr-[5px]">
        <div className="flex min-h-0 flex-1">
          <Page />
          <div className="flex w-[22px] shrink-0 flex-col items-center rounded-tr-[10px] bg-[#2c2c2c] pb-[10px] pt-[11px]">
            <Triangle className="" />
            <div className="mt-[11px] h-[239px] w-3 rounded-full bg-[#9f9f9f]" />
            <Triangle className="mt-auto rotate-180" />
          </div>
        </div>
        <div className="flex h-[22px] shrink-0 items-center rounded-b-[10px] bg-[#2c2c2c] pl-[10px] pr-8">
          <Triangle className="-rotate-90" />
          <div className="ml-[10px] mr-[64px] h-3 flex-1 rounded-full bg-[#9f9f9f]" />
          <Triangle className="rotate-90" />
        </div>
      </div>
      <div className="mt-1 h-px shrink-0 bg-[linear-gradient(90deg,#1d1d24,#8a5a50_10%,#222_15%,#b06a48_20%,#cf7c50_24%,#f4f4f4_27%,#d8dcf0_30%,#9a4c48_35%,#111_40%,#08080c_55%,#5c2030_60%,#caa92c_62%,#b02838_65%,#d8b09a_68%,#5e3a34_75%,#777_85%,#7d7a40_90%,#8c8078)]" />
      <Taskbar />
    </div>
  );
}
